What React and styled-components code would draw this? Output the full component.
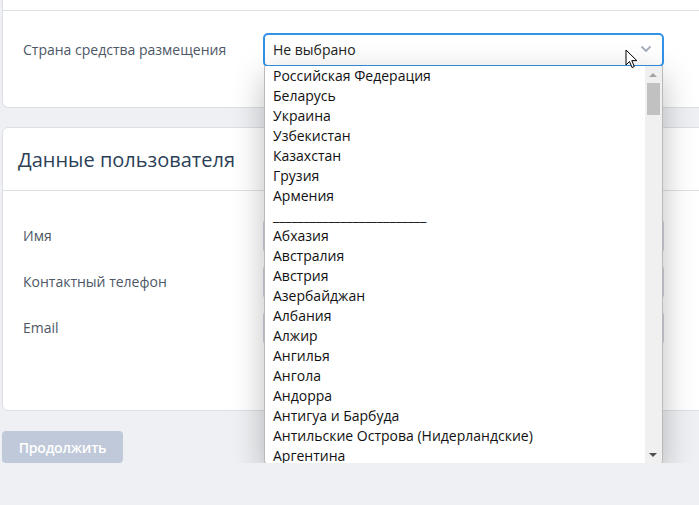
import React from 'react';
import styled, { createGlobalStyle } from 'styled-components';

const Global = createGlobalStyle`
  html, body {
    margin: 0;
    padding: 0;
    background: #eef0f3;
    font-family: "Open Sans", "Noto Sans", sans-serif;
    overflow: hidden;
  }
`;

const Page = styled.div`
  width: 740px;
  padding-left: 2px;
  display: flex;
  flex-direction: column;
  align-items: flex-start;
`;

const Card = styled.div`
  width: 100%;
  box-sizing: border-box;
  background: #fff;
  border: 1px solid #dcdfe5;
  border-top: ${p => (p.cut ? 'none' : '1px solid #dcdfe5')};
  border-radius: ${p => (p.cut ? '0 0 6px 6px' : '6px')};
  margin-bottom: 19px;
`;

const TopStrip = styled.div`
  height: 10px;
  border-bottom: 1px solid #dde1e6;
`;

const CardHeader = styled.div`
  padding: 18px 15px 16px;
  border-bottom: 1px solid #dde1e6;
`;

const Title = styled.h2`
  margin: 0;
  font-size: 20px;
  line-height: 28px;
  font-weight: 500;
  color: #2c3f57;
`;

const CardBody = styled.div`
  padding: ${p => p.pad};
  display: flex;
  flex-direction: column;
  gap: 12px;
`;

const FieldRow = styled.div`
  display: grid;
  grid-template-columns: 240px 401px;
  align-items: center;
  padding-left: 20px;
`;

const Label = styled.div`
  font-size: 14px;
  line-height: 20px;
  padding-bottom: 1px;
  color: #4d5766;
`;

const Input = styled.div`
  height: 34px;
  box-sizing: border-box;
  border: 1px solid #cdd3dc;
  border-radius: 4px;
  background: #fff;
`;

const SelectWrap = styled.div`
  position: relative;
`;

const Select = styled.div`
  height: 34px;
  box-sizing: border-box;
  border: 2px solid #3391e6;
  border-radius: 5px;
  display: flex;
  align-items: center;
  justify-content: space-between;
  padding: 0 10px 2px 8px;
  font-size: 14px;
  color: #222;
`;

const Dropdown = styled.div`
  position: absolute;
  top: 33px;
  left: 1px;
  right: 1px;
  height: 399px;
  background: #fff;
  border: 1px solid #b9b9b9;
  border-top: none;
  border-radius: 0 0 6px 6px;
  box-shadow: 0 10px 32px rgba(0, 0, 0, 0.26);
  overflow: hidden;
  z-index: 5;
`;

const Item = styled.div`
  height: 20px;
  line-height: 20px;
  padding-left: 8px;
  font-size: 14px;
  color: #111;
  white-space: nowrap;
`;

const Scrollbar = styled.div`
  position: absolute;
  top: 0;
  right: 0;
  bottom: 0;
  width: 17px;
  background: #f0f0f0;
`;

const Arrow = styled.div`
  position: absolute;
  left: 4px;
  width: 0;
  height: 0;
  border-left: 4px solid transparent;
  border-right: 4px solid transparent;
  ${p => (p.down
    ? `bottom: 8px; border-top: 4px solid #505050;`
    : `top: 7px; border-bottom: 4px solid #a3a3a3;`)}
`;

const Thumb = styled.div`
  position: absolute;
  top: 17px;
  left: 2px;
  width: 13px;
  height: 32px;
  background: #c1c1c1;
`;

const Cursor = styled.svg`
  position: absolute;
  left: 362px;
  top: 16px;
  z-index: 6;
`;

const Button = styled.button`
  margin-top: 1px;
  width: 121px;
  height: 32px;
  border: none;
  border-radius: 4px;
  background: #c0c9d9;
  color: #fff;
  font-family: inherit;
  font-size: 14px;
  font-weight: 600;
  letter-spacing: -0.2px;
`;

const countries = [
  'Российская Федерация', 'Беларусь', 'Украина', 'Узбекистан', 'Казахстан',
  'Грузия', 'Армения', '_________________________', 'Абхазия', 'Австралия',
  'Австрия', 'Азербайджан', 'Албания', 'Алжир', 'Ангилья', 'Ангола',
  'Андорра', 'Антигуа и Барбуда', 'Антильские Острова (Нидерландские)', 'Аргентина',
];

const App = () => (
  <>
    <Global />
    <Page>
      <Card cut>
        <TopStrip />
        <CardBody pad="22px 0 40px">
          <FieldRow>
            <Label>Страна средства размещения</Label>
            <SelectWrap>
              <Select>
                Не выбрано
                <svg width="12" height="8" viewBox="0 0 12 8">
                  <path d="M1.5 1.5 L6 6 L10.5 1.5" fill="none" stroke="#a3adbb" strokeWidth="1.8" />
                </svg>
              </Select>
              <Dropdown>
                {countries.map(c => <Item key={c}>{c}</Item>)}
                <Scrollbar>
                  <Arrow />
                  <Thumb />
                  <Arrow down />
                </Scrollbar>
              </Dropdown>
              <Cursor width="14" height="21" viewBox="0 0 14 21">
                <path d="M1 1 L1 16 L4.5 12.5 L7 18.5 L9.3 17.5 L6.8 11.6 L11.8 11.6 Z" fill="#fff" stroke="#000" strokeWidth="1" strokeLinejoin="round" />
              </Cursor>
            </SelectWrap>
          </FieldRow>
        </CardBody>
      </Card>
      <Card>
        <CardHeader>
          <Title>Данные пользователя</Title>
        </CardHeader>
        <CardBody pad="28px 0 65px">
          <FieldRow>
            <Label>Имя</Label>
            <Input />
          </FieldRow>
          <FieldRow>
            <Label>Контактный телефон</Label>
            <Input />
          </FieldRow>
          <FieldRow>
            <Label>Email</Label>
            <Input />
          </FieldRow>
        </CardBody>
      </Card>
      <Button disabled>Продолжить</Button>
    </Page>
  </>
);

export default App;
